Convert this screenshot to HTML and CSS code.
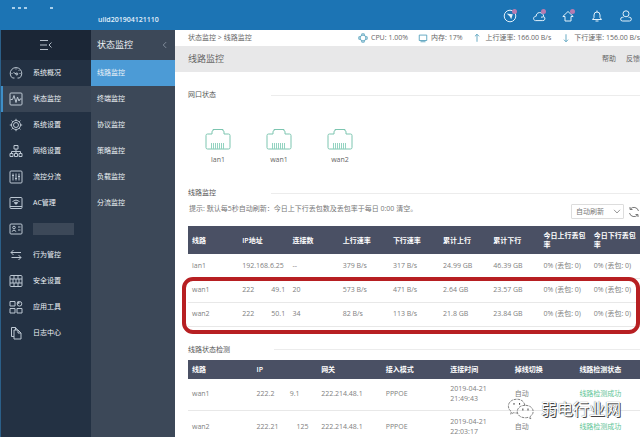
FILE: index.html
```html
<!DOCTYPE html>
<html lang="zh-CN">
<head>
<meta charset="utf-8">
<title>线路监控</title>
<link rel="stylesheet" href="styles.css">
</head>
<body>
<header class="topbar">
  <div class="brand"><span class="marks"><i></i><i></i><i></i><i></i></span><span class="build">uild201904121110</span></div>
  <div class="tools">
    <button class="tool dot" aria-label="导航"><svg viewBox="0 0 14 14"><circle cx="7" cy="7" r="5.8"/><path class="fill" d="M3.6 4.6 9.8 5.2 8.2 10.2 6.8 7.4Z"/></svg></button>
    <button class="tool dot" aria-label="云"><svg viewBox="0 0 14 14"><path d="M3.4 11.6h7.4a2 2 0 0 0 1-3.8C11.6 4.800 9.500 3.400 7.300 3.600 5 3.800 4.200 5.600 4.200 7.200 1 7.400.6 11 3.400 11.600ZM9 8.200l2.800-.4"/></svg></button>
    <button class="tool dot" aria-label="升级"><svg viewBox="0 0 14 14"><path d="M7 2.500 1.800 7.500H4V12h6V7.500h2.200Z"/></svg></button>
    <button class="tool" aria-label="通知"><svg viewBox="0 0 14 14"><path d="M2.500 10.500h9L10 8.500V6a3 3 0 0 0-6 0v2.500ZM7 3V1.500M5.500 12h3"/></svg></button>
    <button class="tool" aria-label="用户"><svg viewBox="0 0 14 14"><circle cx="7" cy="4.800" r="3"/><path d="M4.500 8.300H3.500a1.800 1.800 0 0 0 0 3.700h7a1.800 1.800 0 0 0 0-3.700h-1"/></svg></button>
  </div>
</header>
<div class="shell">
  <nav class="side" aria-label="主菜单">
    <button class="toggle" aria-label="收起菜单"><svg viewBox="0 0 14 12"><path d="M1 1.500h8M1 6h7M1 10.500h8M12.500 3.500 10 6l2.500 2.500"/></svg></button>
    <a href="#"><svg viewBox="0 0 14 14"><path d="M3.500 12A5.800 5.800 0 1 1 10.500 12M3.500 12h2M8.500 12h2M7.500 8 4.500 6.500M7 2.500v1M2.500 7.500h1M11.500 7.500h-1M10.300 4.200l-.8.800"/><circle cx="7.800" cy="8" r="1"/></svg>系统概况</a>
    <a href="#" class="on"><svg viewBox="0 0 14 14"><rect x="1" y="1" width="12" height="12" rx="1"/><path d="M1.500 7.500H3.500L5 3.500 7 10.500 8.500 5 10 9l1-2h1.500"/></svg>状态监控</a>
    <a href="#"><svg viewBox="0 0 14 14"><circle cx="7" cy="7" r="2.500"/><circle cx="7" cy="7" r="4.500"/><path class="teeth" d="M7 .8v1.700M7 11.500v1.700M.8 7h1.700M11.500 7h1.700M2.600 2.600l1.200 1.200M10.200 10.200l1.200 1.200M2.600 11.400l1.200-1.200M10.200 3.800l1.200-1.200"/></svg>系统设置</a>
    <a href="#"><svg viewBox="0 0 14 14"><path d="M5 1.500h4v3.500H5ZM1 9.500h3v3H1ZM5.500 9.500h3v3h-3ZM10 9.500h3v3h-3ZM7 5v4.500M2.500 9.500v-2h9v2"/></svg>网络设置</a>
    <a href="#"><svg viewBox="0 0 14 14"><rect x="1" y="1" width="12" height="12" rx="1"/><path d="M4 3.500v7M7 3.500v7M10 3.500v7M3 5.500h2M6 8.500h2M9 6.500h2"/></svg>流控分流</a>
    <a href="#"><svg viewBox="0 0 14 14"><rect x="1" y="1.500" width="12" height="11" rx="1"/><path d="M1 10.500h12M3.500 5.500q3.500-3 7 0M5 7q2-1.700 4 0"/><path class="fill" d="M5 6.500h4L7 9Z"/></svg>AC管理</a>
    <a href="#" aria-label="用户认证"><svg viewBox="0 0 14 14"><rect x="1" y="2" width="12" height="10" rx="1"/><circle cx="5" cy="5.500" r="1.300"/><path d="M2.800 9.500q2.200-3 4.400 0M9 5h2.500M9 8h2.500"/></svg><span class="blank"></span></a>
    <a href="#"><svg viewBox="0 0 14 14"><path d="M12 4.500H2L4.500 2M2 4.500 4.500 7M2.500 9.500H12L9.500 7M12 9.500 9.500 12"/></svg>行为管控</a>
    <a href="#"><svg viewBox="0 0 14 14"><rect x="1" y="1.500" width="12" height="11" rx="1"/><path d="M1 5h12M1 9h12M5 1.500V5M9 1.500V5M4 5v4M7 5v4M10 5v4M5 9v3.500M9 9v3.500"/></svg>安全设置</a>
    <a href="#"><svg viewBox="0 0 14 14"><path d="M1 1.500h5v4.500H1ZM1 8.500h5V13H1ZM8 8.500h5V13H8Z"/><circle cx="10.500" cy="3.800" r="2.300"/><path class="fill" d="M10.500 3.800V1.500H8.300v2.300Z"/></svg>应用工具</a>
    <a href="#"><svg viewBox="0 0 14 14"><path d="M5 10.500H2.500v-9h4L8.500 4M5 4h4l3 3v6H5ZM9 4v3h3M6.500 1.500V4"/></svg>日志中心</a>
  </nav>
  <nav class="sub" aria-label="状态监控">
    <h2>状态监控<svg viewBox="0 0 6 8"><path d="M5 .5 1.500 4 5 7.500"/></svg></h2>
    <a href="#" class="on">线路监控</a>
    <a href="#">终端监控</a>
    <a href="#">协议监控</a>
    <a href="#">策略监控</a>
    <a href="#">负载监控</a>
    <a href="#">分流监控</a>
  </nav>
  <main>
    <div class="crumbs">
      <span>状态监控 &gt; 线路监控</span>
      <ul class="stats">
        <li><svg viewBox="0 0 12 12"><circle cx="6" cy="6" r="3.500"/><path d="M4.500 2.500V1h3v1.500M4.500 9.500V11h3V9.500M2.500 4.500H1v3h1.500M9.500 4.500H11v3H9.500"/></svg>CPU: 1.00%</li>
        <li><svg viewBox="0 0 12 12"><path d="M1.500 2.500h9v6.500h-9ZM3 10.500h6"/></svg>内存: 17%</li>
        <li><svg viewBox="0 0 12 12"><path d="M6 10.500v-9M3.500 4 6 1.500 8.500 4"/></svg>上行速率: 166.00 B/s</li>
        <li><svg viewBox="0 0 12 12"><path d="M6 1.500v9M3.500 8 6 10.500 8.500 8"/></svg>下行速率: 156.00 B/s</li>
      </ul>
    </div>
    <div class="titlebar"><h1>线路监控</h1><a href="#">帮助</a><a href="#">反馈</a></div>

    <h3 class="sec first">网口状态</h3>
    <div class="ports">
      <figure><svg viewBox="0 0 26 22"><path d="M2.500 6H7V3.500q0-.5.500-.5H8V1.500h10V3h.5q.5 0 .5.500V6h4.500q1.500 0 1.500 1.500v12q0 1.500-1.500 1.500h-21Q1 21 1 19.500v-12Q1 6 2.500 6Z"/><path class="pins" d="M6.500 15v6M8.500 15v6M10.500 15v6M12.500 15v6M14.500 15v6M16.500 15v6M18.500 15v6"/></svg><figcaption>lan1</figcaption></figure>
      <figure><svg viewBox="0 0 26 22"><path d="M2.500 6H7V3.500q0-.5.500-.5H8V1.500h10V3h.5q.5 0 .5.500V6h4.500q1.500 0 1.500 1.500v12q0 1.500-1.500 1.500h-21Q1 21 1 19.500v-12Q1 6 2.500 6Z"/><path class="pins" d="M6.500 15v6M8.500 15v6M10.500 15v6M12.500 15v6M14.500 15v6M16.500 15v6M18.500 15v6"/></svg><figcaption>wan1</figcaption></figure>
      <figure><svg viewBox="0 0 26 22"><path d="M2.500 6H7V3.500q0-.5.500-.5H8V1.500h10V3h.5q.5 0 .5.500V6h4.500q1.500 0 1.500 1.500v12q0 1.500-1.500 1.500h-21Q1 21 1 19.500v-12Q1 6 2.500 6Z"/><path class="pins" d="M6.500 15v6M8.500 15v6M10.500 15v6M12.500 15v6M14.500 15v6M16.500 15v6M18.500 15v6"/></svg><figcaption>wan2</figcaption></figure>
    </div>

    <h3 class="sec">线路监控</h3>
    <div class="hint">
      <p>提示: 默认每5秒自动刷新：今日上下行丢包数及丢包率于每日 0:00 清空。</p>
      <div class="refresh">
        <select aria-label="刷新方式"><option>自动刷新</option></select>
        <button aria-label="刷新"><svg viewBox="0 0 12 12"><path d="M1.500 7a4.700 4.700 0 0 0 8.300 1.800M10.500 5A4.700 4.700 0 0 0 2.200 3.200M2 1v2.500h2.500M10 11V8.500H7.500"/></svg></button>
      </div>
    </div>
    <div class="marked">
      <table class="lines">
        <thead><tr><th>线路</th><th>IP地址</th><th>连接数</th><th>上行速率</th><th>下行速率</th><th>累计上行</th><th>累计下行</th><th>今日上行丢包率</th><th>今日下行丢包率</th></tr></thead>
        <tbody>
          <tr><td>lan1</td><td>192.168.6.25</td><td>--</td><td>379 B/s</td><td>317 B/s</td><td>24.99 GB</td><td>46.39 GB</td><td>0% (丢包: 0)</td><td>0% (丢包: 0)</td></tr>
          <tr><td>wan1</td><td><span class="ip"><span>222</span><span>49.1</span></span></td><td>20</td><td>573 B/s</td><td>471 B/s</td><td>2.64 GB</td><td>23.57 GB</td><td>0% (丢包: 0)</td><td>0% (丢包: 0)</td></tr>
          <tr><td>wan2</td><td><span class="ip"><span>222</span><span>50.1</span></span></td><td>34</td><td>82 B/s</td><td>113 B/s</td><td>21.8 GB</td><td>23.84 GB</td><td>0% (丢包: 0)</td><td>0% (丢包: 0)</td></tr>
        </tbody>
      </table>
      <div class="ring"></div>
    </div>

    <h3 class="sec last">线路状态检测</h3>
    <table class="checks">
      <thead><tr><th>线路</th><th>IP</th><th>网关</th><th>接入模式</th><th>连接时间</th><th>掉线切换</th><th>线路检测状态</th></tr></thead>
      <tbody>
        <tr><td>wan1</td><td><span class="ip"><span>222.2</span><span>9.1</span></span></td><td>222.214.48.1</td><td>PPPOE</td><td>2019-04-21 21:49:43</td><td>自动</td><td class="ok">线路检测成功</td></tr>
        <tr><td>wan2</td><td><span class="ip wide"><span>222.21</span><span>125</span></span></td><td>222.214.48.1</td><td>PPPOE</td><td>2019-04-21 22:03:17</td><td>自动</td><td class="ok">线路检测成功</td></tr>
      </tbody>
    </table>
  </main>
</div>
<div class="watermark">
  <svg viewBox="0 0 30 24"><path d="M19 8C18.500 4 15 1.500 10.500 1.500 5 1.500 1.500 5 1.500 9c0 2.500 1.200 4.500 3.300 5.800L4 17.500l3.300-1.600q1.600.5 3.700.4"/><path d="M19.500 8c-5 0-8.500 3-8.500 6.700s3.500 6.700 8.500 6.700q1.700 0 3.200-.5l3 1.600-.8-2.600c2-1.300 3.100-3.100 3.100-5.200C28 11 24.500 8 19.500 8Z"/><path class="eyes" d="M7 6.500h1M13 6.500h1M16.500 12.500h1M22 12.500h1"/></svg>
  <span>弱电行业网</span>
</div>
</body>
</html>
```
FILE: styles.css
```css
* { box-sizing: border-box; }
html, body { height: 100%; }
body {
  margin: 0;
  display: flex;
  flex-direction: column;
  overflow: hidden;
  background: #fff;
  color: #666;
  font: 7px/10px "Open Sans", "Noto Sans CJK SC", sans-serif;
}
h1, h2, h3, p, ul, figure { margin: 0; padding: 0; font-weight: 400; }
a { color: inherit; text-decoration: none; }
button { padding: 0; border: 0; background: none; color: inherit; font: inherit; }
svg { display: block; fill: none; stroke: currentColor; stroke-width: 1; flex: none; }
svg .fill { fill: currentColor; stroke: none; }

.topbar {
  flex: none;
  height: 30px;
  display: flex;
  justify-content: space-between;
  align-items: center;
  background: #1c74b4;
  color: #e2f1fb;
}
.brand { display: flex; align-self: stretch; }
.marks { width: 98px; padding: 7px 0 0 12px; display: flex; gap: 3px; }
.marks i { width: 3px; height: 2px; background: #a9cfea; }
.marks i:last-child { margin-left: 20px; }
.build { align-self: flex-end; padding-bottom: 5px; font-weight: 600; }
.tools { display: flex; gap: 15px; padding: 2px 7px 0 0; }
.tool { position: relative; width: 14px; height: 14px; }
.dot::after {
  content: "";
  position: absolute;
  top: 0;
  right: 0;
  width: 5px;
  height: 5px;
  border-radius: 50%;
  background: #b87bb0;
}

.shell { flex: 1; min-height: 0; display: flex; }
.side {
  flex: none;
  width: 91px;
  background: #233143;
  border-left: 1px solid #2b5f88;
  color: #eef2f6;
}
.toggle {
  display: flex;
  align-items: center;
  justify-content: center;
  width: 100%;
  height: 30px;
  background: #1b2636;
  color: #b4bdc8;
}
.toggle svg { width: 14px; height: 12px; }
.side a { display: flex; align-items: center; gap: 10px; height: 26px; padding-left: 8px; }
.side a svg { width: 14px; height: 14px; color: #bcc7d2; }
.side a.on { background: #384454; box-shadow: inset 2px 0 #3f8fc8; }
.blank { width: 41px; height: 12px; background: #3c4858; }

.sub { flex: none; width: 84px; background: #3c4858; color: #eef2f6; }
.sub h2 {
  display: flex;
  align-items: center;
  justify-content: space-between;
  height: 30px;
  padding: 0 8px 0 6px;
  font-size: 9px;
}
.sub h2 svg { width: 5px; height: 8px; color: #8e99a7; }
.sub a { display: flex; align-items: center; height: 26px; padding-left: 6px; }
.sub a.on { background: #4c9bd6; }

main { flex: 1; min-width: 0; }
.crumbs { display: flex; justify-content: space-between; align-items: center; height: 16px; padding-left: 13px; }
.stats { display: flex; gap: 10px; list-style: none; white-space: nowrap; }
.stats li { display: flex; align-items: center; gap: 3px; }
.stats svg { width: 10px; height: 10px; color: #4a9ab8; }
.titlebar { display: flex; align-items: center; gap: 10px; height: 26px; padding-left: 13px; background: #e8e8e9; }
.titlebar h1 { margin-right: auto; font-size: 9px; }

.sec {
  display: flex;
  align-items: center;
  height: 10px;
  margin: 0 0 0 13px;
  font-size: 7px;
  color: #555;
}
.sec::before { content: ""; order: 2; flex: 1; height: 1px; margin-left: 55px; background: #ececec; }
.first { margin-top: 18px; }
.last { margin: 18px 0 5px 13px; }
.last::before { margin-left: 44px; }
.ports { display: flex; gap: 35px; padding: 28px 0 23px 30px; }
.ports figure { width: 26px; text-align: center; }
.ports svg { width: 26px; height: 22px; color: #7cc5b0; }
.ports .pins { stroke: #92d3c0; }
.ports figcaption { padding-top: 5px; }

.hint { display: flex; justify-content: space-between; height: 28px; padding: 6px 0 0 14px; color: #777; }
.refresh { display: flex; align-items: center; gap: 4px; height: 15px; }
.refresh select {
  width: 53px;
  height: 15px;
  padding: 0 4px;
  appearance: none;
  border: 1px solid #ddd;
  border-radius: 1px;
  background: #fff url("data:image/svg+xml,%3Csvg xmlns='http://www.w3.org/2000/svg' viewBox='0 0 8 5'%3E%3Cpath d='M1 .8 4 4 7 .8' fill='none' stroke='%23999'/%3E%3C/svg%3E") no-repeat right 2px center / 8px 5px;
  color: #777;
  font: inherit;
}
.refresh svg { width: 12px; height: 12px; color: #777; }

table { width: 100%; border-collapse: collapse; table-layout: fixed; color: #808080; }
.marked { position: relative; margin-left: 13px; }
.checks { width: calc(100% - 13px); margin-left: 13px; }
th, td { padding: 0 4px; text-align: left; vertical-align: middle; }
th { height: 28px; background: #4a5064; color: #fff; font-weight: 600; line-height: 9px; }
td { height: 24px; border-bottom: 1px solid #e8e8e8; white-space: nowrap; }
.checks th { height: 19px; }
.checks td { height: 32px; white-space: normal; }
.checks .ok { color: #5ec596; }
.ip { display: flex; justify-content: space-between; width: 43px; }
.wide { width: 52px; }
.ring {
  position: absolute;
  inset: 51px 0 -7px -6px;
  border: 4px solid #b71f22;
  border-radius: 11px;
}

.watermark {
  position: absolute;
  right: 19px;
  bottom: 16px;
  display: flex;
  align-items: center;
  gap: 6px;
  color: #fff;
  font-size: 16px;
  line-height: 24px;
  text-shadow: 1px 1px 0 #444, 0 0 1px #555;
}
.watermark svg { width: 28px; height: 24px; color: #777; stroke-dasharray: 3 1; }
.watermark .eyes { stroke: #333; stroke-width: 2; stroke-dasharray: none; }
```
